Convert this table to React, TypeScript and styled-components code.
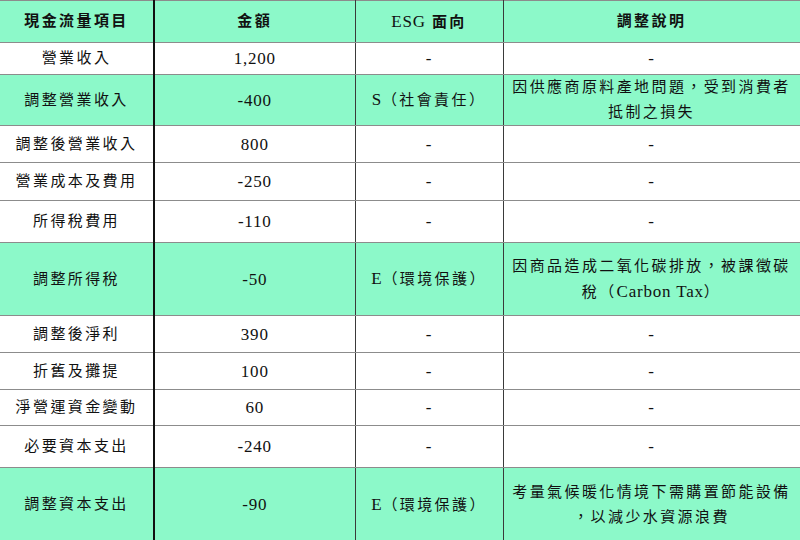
import React from 'react';
import styled, { createGlobalStyle } from 'styled-components';

const GlobalStyle = createGlobalStyle`
  html, body {
    margin: 0;
    padding: 0;
    background: #ffffff;
  }
`;

interface Row {
  item: string;
  amount: string;
  esg: [string, string] | null;
  note: React.ReactNode[];
  height: number;
  adjust?: boolean;
}

const Latin = styled.span`
  font-size: 17px;
  letter-spacing: 0.8px;
  font-weight: normal;
`;

const rows: Row[] = [
  { item: '營業收入', amount: '1,200', esg: null, note: [], height: 32 },
  {
    item: '調整營業收入',
    amount: '-400',
    esg: ['S', '（社會責任）'],
    note: ['因供應商原料產地問題，受到消費者', '抵制之損失'],
    height: 49,
    adjust: true,
  },
  { item: '調整後營業收入', amount: '800', esg: null, note: [], height: 37 },
  { item: '營業成本及費用', amount: '-250', esg: null, note: [], height: 38 },
  { item: '所得稅費用', amount: '-110', esg: null, note: [], height: 42 },
  {
    item: '調整所得稅',
    amount: '-50',
    esg: ['E', '（環境保護）'],
    note: [
      '因商品造成二氧化碳排放，被課徵碳',
      <>
        稅（<Latin>Carbon Tax</Latin>）
      </>,
    ],
    height: 73,
    adjust: true,
  },
  { item: '調整後淨利', amount: '390', esg: null, note: [], height: 37 },
  { item: '折舊及攤提', amount: '100', esg: null, note: [], height: 37 },
  { item: '淨營運資金變動', amount: '60', esg: null, note: [], height: 36 },
  { item: '必要資本支出', amount: '-240', esg: null, note: [], height: 42 },
  {
    item: '調整資本支出',
    amount: '-90',
    esg: ['E', '（環境保護）'],
    note: ['考量氣候暖化情境下需購置節能設備', '，以減少水資源浪費'],
    height: 74,
    adjust: true,
  },
];

const Table = styled.table`
  width: 800px;
  height: 540px;
  border-collapse: collapse;
  table-layout: fixed;
  font-family: 'Liberation Serif', 'Noto Sans CJK TC', serif;
  font-size: 15px;
  color: #111;
`;

const Tr = styled.tr<{ $green?: boolean; $h: number }>`
  height: ${(p) => p.$h}px;
  background: ${(p) => (p.$green ? '#8cf9c9' : '#ffffff')};
`;

const Cell = styled.td<{ $col: number; $num?: boolean }>`
  padding: 0 6px;
  text-align: center;
  vertical-align: middle;
  font-size: ${(p) => (p.$num ? '17px' : '15px')};
  letter-spacing: ${(p) => (p.$num ? '0.8px' : '2.4px')};
  line-height: 25px;
  border-top: 1px solid #8c8c8c;
  border-bottom: 1px solid #8c8c8c;
  border-right: ${(p) =>
    p.$col === 0 ? '2px solid #111' : p.$col === 3 ? '1px solid #8c8c8c' : '1px solid #3a3a3a'};
  white-space: nowrap;
`;

const HeadCell = styled(Cell).attrs({ as: 'th' })`
  font-weight: bold;
  font-size: 15px;
`;

const colWidths = [154, 201, 148, 297];

export default function App() {
  return (
    <>
      <GlobalStyle />
      <Table>
        <colgroup>
          {colWidths.map((w, i) => (
            <col key={i} style={{ width: w }} />
          ))}
        </colgroup>
        <thead>
          <Tr $green $h={42}>
            <HeadCell $col={0}>現金流量項目</HeadCell>
            <HeadCell $col={1}>金額</HeadCell>
            <HeadCell $col={2}>
              <Latin>ESG</Latin> 面向
            </HeadCell>
            <HeadCell $col={3}>調整說明</HeadCell>
          </Tr>
        </thead>
        <tbody>
          {rows.map((r) => (
            <Tr key={r.item} $green={r.adjust} $h={r.height}>
              <Cell $col={0}>{r.item}</Cell>
              <Cell $col={1} $num>
                {r.amount}
              </Cell>
              <Cell $col={2} $num={!r.esg}>
                {r.esg ? (
                  <>
                    <Latin>{r.esg[0]}</Latin>
                    {r.esg[1]}
                  </>
                ) : (
                  '-'
                )}
              </Cell>
              <Cell $col={3} $num={r.note.length === 0}>
                {r.note.length === 0
                  ? '-'
                  : r.note.map((line, i) => (
                      <React.Fragment key={i}>
                        {i > 0 && <br />}
                        {line}
                      </React.Fragment>
                    ))}
              </Cell>
            </Tr>
          ))}
        </tbody>
      </Table>
    </>
  );
}
